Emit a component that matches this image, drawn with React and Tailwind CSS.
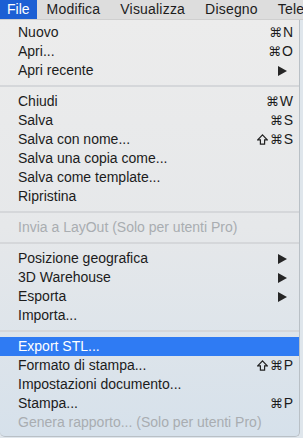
import React from 'react';

const menuBar = [
  { label: 'File', active: true },
  { label: 'Modifica' },
  { label: 'Visualizza' },
  { label: 'Disegno' },
  { label: 'Telecamera' }
];

const items = [
  { label: 'Nuovo', shortcut: 'N' },
  { label: 'Apri...', shortcut: 'O' },
  { label: 'Apri recente', submenu: true },
  { sep: true },
  { label: 'Chiudi', shortcut: 'W' },
  { label: 'Salva', shortcut: 'S' },
  { label: 'Salva con nome...', shortcut: 'S', shift: true },
  { label: 'Salva una copia come...' },
  { label: 'Salva come template...' },
  { label: 'Ripristina' },
  { sep: true },
  { label: 'Invia a LayOut (Solo per utenti Pro)', disabled: true },
  { sep: true },
  { label: 'Posizione geografica', submenu: true },
  { label: '3D Warehouse', submenu: true },
  { label: 'Esporta', submenu: true },
  { label: 'Importa...' },
  { sep: true },
  { label: 'Export STL...', selected: true },
  { label: 'Formato di stampa...', shortcut: 'P', shift: true },
  { label: 'Impostazioni documento...' },
  { label: 'Stampa...', shortcut: 'P' },
  { label: 'Genera rapporto... (Solo per utenti Pro)', disabled: true }
];

const Arrow = () => (
  <svg width="9" height="10" viewBox="0 0 9 10" className="mr-[6px]">
    <path d="M0 0 L9 5 L0 10 Z" fill="#262626" />
  </svg>
);

// simbolo Maiusc (⇧) disegnato
const ShiftIcon = () => (
  <svg width="11" height="11" viewBox="0 0 11 11" className="mr-[2px]">
    <path
      d="M5.5 0.9 L10.2 5.8 H7.6 V10.2 H3.4 V5.8 H0.8 Z"
      fill="none"
      stroke="#222"
      strokeWidth="1.2"
      strokeLinejoin="miter"
    />
  </svg>
);

export default function App() {
  return (
    <div className="w-[303px] h-[438px] overflow-hidden bg-[#dfe6ec] font-['Liberation_Sans','DejaVu_Sans',sans-serif] text-[14px] text-[#1c1c1c]">
      {/* barra dei menu */}
      <div className="h-[20px] flex items-center bg-[#dddddd] border-b border-[#cfcfcf] whitespace-nowrap">
        {menuBar.map((m) => (
          <div
            key={m.label}
            className={`h-full flex items-center ${
              m.active ? 'bg-[#1c5fd4] text-white px-[7px]' : 'px-[10px] tracking-[0.2px]'
            }`}
          >
            {m.label}
          </div>
        ))}
      </div>

      {/* menu a tendina */}
      <div className="w-[300px] pt-[3px] pb-[4px] rounded-b-[5px] border-r border-b border-[#b9c0c6] bg-gradient-to-b from-[#ececec] via-[#e6e8ea] to-[#d6e1eb]">
        {items.map((it, i) =>
          it.sep ? (
            <div key={i} className="h-[12px] flex items-center">
              <div className="w-full h-[2px] bg-[#d5d7da]" />
            </div>
          ) : (
            <div
              key={i}
              className={`h-[19px] flex items-center justify-between pl-[18px] pr-[6px] whitespace-nowrap ${
                it.selected ? 'bg-[#2f7bf3] text-white' : it.disabled ? 'text-[#a9adb1]' : ''
              }`}
            >
              <span>{it.label}</span>
              {it.shortcut && (
                <span className="flex items-center">
                  {it.shift && <ShiftIcon />}
                  <span className="font-['DejaVu_Sans',sans-serif] text-[13px] leading-none">⌘</span>
                  <span className="ml-[1px]">{it.shortcut}</span>
                </span>
              )}
              {it.submenu && <Arrow />}
            </div>
          )
        )}
      </div>
    </div>
  );
}
